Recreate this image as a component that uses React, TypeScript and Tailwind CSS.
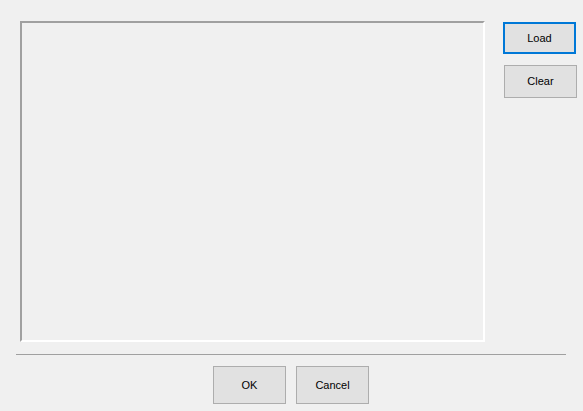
export default function App() {
  const btn =
    "flex items-center justify-center bg-[#e1e1e1] text-[11px] text-black leading-none";

  return (
    <div
      className="w-[583px] h-[411px] bg-[#f0f0f0] flex flex-col"
      style={{ fontFamily: '"Liberation Sans", Arial, sans-serif' }}
    >
      <div className="flex pl-[20px] pt-[21px]">
        <div className="w-[465px] h-[321px] border-2 border-t-[#a0a0a0] border-l-[#a0a0a0] border-b-white border-r-white bg-[#f0f0f0]" />
        <div className="flex flex-col ml-[18px] pt-px">
          <button className={`${btn} w-[73px] h-[32px] border-2 border-[#0078d7]`}>
            Load
          </button>
          <button
            className={`${btn} w-[73px] h-[33px] mt-[11px] ml-px border border-[#adadad]`}
          >
            Clear
          </button>
        </div>
      </div>
      <div className="ml-[16px] mt-[12px] w-[550px] h-px bg-[#a0a0a0]" />
      <div className="flex ml-[213px] mt-[11px] gap-[10px]">
        <button className={`${btn} w-[73px] h-[38px] border border-[#adadad]`}>
          OK
        </button>
        <button className={`${btn} w-[73px] h-[38px] border border-[#adadad]`}>
          Cancel
        </button>
      </div>
    </div>
  );
}
